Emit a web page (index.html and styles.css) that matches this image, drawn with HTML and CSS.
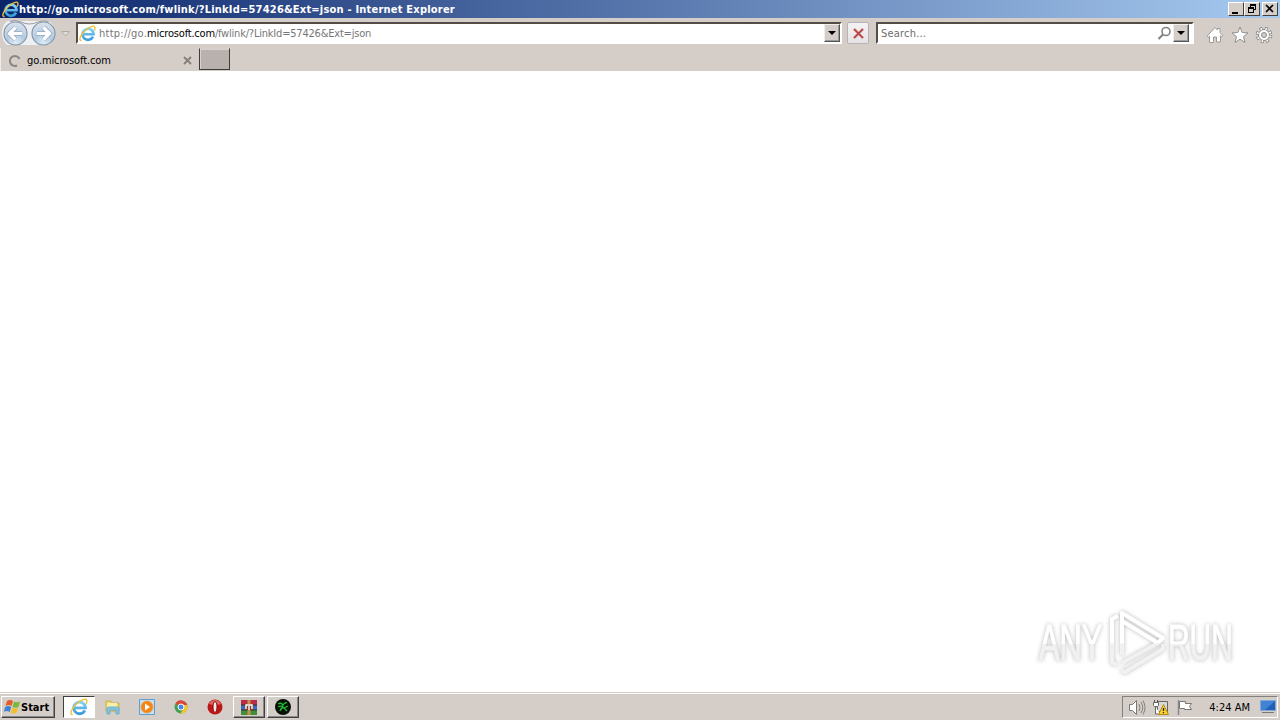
FILE: index.html
```html
<!DOCTYPE html>
<html lang="en">
<head>
  <meta charset="UTF-8" />
  <title>http://go.microsoft.com/fwlink/?LinkId=57426&amp;Ext=json - Internet Explorer</title>
  <link rel="stylesheet" href="styles.css">
</head>
<body>

<!-- shared icons -->
<svg class="defs" width="0" height="0">
  <defs>
    <linearGradient id="blueE" x1="0" y1="0" x2="0" y2="1">
      <stop offset="0" stop-color="#7fd4f8"/>
      <stop offset="1" stop-color="#3a9bdc"/>
    </linearGradient>
    <radialGradient id="orb" cx=".5" cy=".9" r=".9">
      <stop offset="0" stop-color="#dcedf8"/>
      <stop offset=".45" stop-color="#b4cae0"/>
      <stop offset="1" stop-color="#dbe4ee"/>
    </radialGradient>
    <symbol id="ie" viewBox="0 0 16 16">
      <path d="M13.200 11A5.200 5.200 0 1 1 13.700 8.700H4" fill="none" stroke="url(#blueE)" stroke-width="2.500"/>
      <path d="M2.400 14.6C-.8 15 1.2 9.4 5.6 5.4 9.600 1.700 14.400-.3 15 2c.3 1-.2 2.200-.8 3.200" fill="none" stroke="#f0c03a" stroke-width="1.300"/>
    </symbol>
  </defs>
</svg>

<div class="titlebar">
  <svg class="title-icon" width="17" height="17"><use href="#ie"/></svg>
  <span class="title-text">http://go.microsoft.com/fwlink/?LinkId=57426&amp;Ext=json - Internet Explorer</span>
  <div class="window-buttons">
    <button class="win-btn"><svg width="14" height="12"><path d="M3 9h6v2H3z"/></svg></button>
    <button class="win-btn"><svg width="14" height="12"><path d="M5 1h6v6H9V6h1V3H6v1H5zM3 4h6v6H3zM4 6v3h4V6z" fill-rule="evenodd"/></svg></button>
    <button class="win-btn win-close"><svg width="14" height="12"><path d="M3 2l7 7M10 2L3 9" stroke="#000" stroke-width="1.7"/></svg></button>
  </div>
</div>

<div class="toolbar">
  <svg class="nav" width="74" height="30" viewBox="0 0 74 30">
    <path d="M7 3H49Q55 8 55 15T49 27H7Q2 22 2 15T7 3z" fill="#edf0f3"/>
    <path d="M10 3.500Q15 1.500 21 4q8 4 17 0 6-2.500 11 0" fill="none" stroke="#9a9a9c"/>
    <circle cx="15.500" cy="15.500" r="11.500" fill="url(#orb)" stroke="#8796a8" stroke-width="1.200"/>
    <circle cx="43.500" cy="15.500" r="11.500" fill="url(#orb)" stroke="#8796a8" stroke-width="1.200"/>
    <path d="M22 15.500H10M15.500 9.500l-6 6 6 6" fill="none" stroke="#93a9c4" stroke-width="4.600"/>
    <path d="M22 15.500H10M15.500 9.500l-6 6 6 6" fill="none" stroke="#fff" stroke-width="3.200"/>
    <path d="M37 15.500H49M43.500 9.500l6 6-6 6" fill="none" stroke="#93a9c4" stroke-width="4.600"/>
    <path d="M37 15.500H49M43.500 9.500l6 6-6 6" fill="none" stroke="#fff" stroke-width="3.200"/>
    <path d="M61.500 13.500h8l-4 4.500z" fill="#e2deda" stroke="#b0aca8"/>
  </svg>
  <div class="field address">
    <svg width="17" height="17"><use href="#ie"/></svg>
    <span class="url"><span class="scheme">http://go.</span><b>microsoft.com</b>/fwlink/?LinkId=57426&amp;Ext=json</span>
    <button class="drop"></button>
  </div>
  <button class="stop"><svg width="13" height="13"><path d="M2 2l9 9M11 2l-9 9" stroke="#e6b4b4" stroke-width="3"/><path d="M2 2l9 9M11 2l-9 9" stroke="#b23d40" stroke-width="1.700"/></svg></button>
  <div class="field search">
    <span class="hint">Search...</span>
    <svg width="15" height="15" viewBox="0 0 15 15"><circle cx="9" cy="5.500" r="4" fill="none" stroke="#828282" stroke-width="1.600"/><path d="M6 8.500L1.500 13" stroke="#828282" stroke-width="2.200"/></svg>
    <button class="drop"></button>
  </div>
  <div class="tools">
    <svg width="18" height="18" viewBox="0 0 18 18"><path d="M9 1.500l2.500 2.500V2.500h2.500v4l2.800 3-1.300 1-1-.8v6.300h-4V11h-3v5.500h-4v-6.300l-1 .8-1.300-1z" fill="#fff" stroke="#9a9a9a"/></svg>
    <svg width="18" height="18" viewBox="0 0 18 18"><path d="M9 1l2.200 5.500 5.800.4-4.500 3.700 1.500 5.900-5-3.300-5 3.300 1.500-5.900L1 6.900l5.800-.4z" fill="#fff" stroke="#8e8e8e"/></svg>
    <svg width="18" height="18" viewBox="0 0 18 18"><circle cx="9" cy="9" r="6.500" fill="none" stroke="#888" stroke-width="3.600" stroke-dasharray="2.900 2.205"/><circle cx="9" cy="9" r="5.500" fill="#fff" stroke="#888"/><circle cx="9" cy="9" r="6.500" fill="none" stroke="#fff" stroke-width="2" stroke-dasharray="1.500 3.605" stroke-dashoffset="-.7"/><circle cx="9" cy="9" r="2.500" fill="#d6cec8" stroke="#888"/></svg>
  </div>
</div>

<div class="tabs">
  <div class="tab">
    <svg width="14" height="14" viewBox="0 0 14 14"><path d="M9 11.500A5 5 0 1 1 11.500 5" fill="none" stroke="#898582" stroke-width="2"/></svg>
    <span class="tab-title">go.microsoft.com</span>
    <svg class="tab-close" width="9" height="9" viewBox="0 0 9 9"><path d="M1 1l7 7M8 1L1 8" stroke="#827e7a" stroke-width="1.800"/></svg>
  </div>
  <div class="new-tab"></div>
</div>

<div class="page">
  <svg class="watermark" width="210" height="74" viewBox="0 0 210 74">
    <defs>
      <linearGradient id="mark" x1="0" y1="0" x2="0" y2="74" gradientUnits="userSpaceOnUse">
        <stop offset=".5" stop-color="#fff"/>
        <stop offset=".51" stop-color="#f1f1f1"/>
      </linearGradient>
      <linearGradient id="markText" x1="0" y1="-52" x2="0" y2="22" gradientUnits="userSpaceOnUse">
        <stop offset=".5" stop-color="#fff"/>
        <stop offset=".51" stop-color="#f1f1f1"/>
      </linearGradient>
    </defs>
    <text transform="translate(9 54) scale(.67 1.100)">ANY</text>
    <text transform="translate(138 54) scale(.65 1.100)">RUN</text>
    <path class="mark-line" d="M88 10l-6 3v43l5 3M92 49V7l41 25-5 5L92 15M92 57l36-20M91 64l4 2 38-23v-5"/>
  </svg>
</div>

<div class="taskbar">
  <button class="start">
    <svg width="17" height="16" viewBox="0 0 17 16"><path d="M3 2q3-2 6 0L7.500 7q-3-2-6 0z" fill="#e65b29"/><path d="M10 2.500q3 1.500 6 0L14.500 8q-3 1.500-6 0z" fill="#78b83b"/><path d="M1.200 8q3-2 6 0l-1.500 5q-3-2-6 0z" fill="#3d82d3"/><path d="M8.200 8.700q3 1.500 6 0l-1.500 5q-3 1.500-6 0z" fill="#f6bf32"/></svg>
    <span>Start</span>
  </button>
  <div class="tasks">
    <div class="task active"><svg width="18" height="18"><use href="#ie"/></svg></div>
    <div class="task"><svg width="18" height="18" viewBox="0 0 18 18"><path d="M2 3h5l1 2h7v8H2z" fill="#ead777" stroke="#c8ac4d"/><path d="M3 5h10v4H3z" fill="#f9efad"/><path d="M3 16v-5q0-2 2-2h8q2 0 2 2v5h-3v-4H6v4z" fill="#82c5e4" stroke="#60a6ca" stroke-width=".8"/></svg></div>
    <div class="task"><svg width="18" height="18" viewBox="0 0 18 18"><path d="M1.500 1.500h15v15h-15z" fill="#c7e0f2" stroke="#5ba0d4"/><circle cx="9" cy="9" r="6" fill="#f58412" stroke="#e6a14b"/><path d="M7 5.500l5 3.500-5 3.500z" fill="#fff"/></svg></div>
    <div class="task"><svg width="16" height="16" viewBox="0 0 16 16"><circle cx="8" cy="8" r="6.500" fill="#43a251"/><path d="M8 8L2.400 4.700A6.500 6.500 0 0 1 14.300 6H8z" fill="#dc4639"/><path d="M8 8l3 1-3.500 5.500A6.500 6.500 0 0 0 14.300 6H8z" fill="#f6c42c"/><circle cx="8" cy="8" r="3" fill="#4687e8" stroke="#fff"/></svg></div>
    <div class="task"><svg width="18" height="18" viewBox="0 0 18 18"><circle cx="9" cy="9" r="7.500" fill="#bd1717"/><path d="M3 6q2-4 6-4t6 4q-6 2-12 0z" fill="#dc6863"/><ellipse cx="9" cy="9" rx="2" ry="5.500" fill="#f8e9e9" stroke="#8d0d0d"/></svg></div>
    <div class="task raised"><svg width="18" height="17" viewBox="0 0 18 17"><path d="M1 1h16v5H1z" fill="#b92b48"/><path d="M1 6h16v5H1z" fill="#3e69b5"/><path d="M1 11h16v5H1z" fill="#438b3d"/><path d="M1 6h16M1 11h16" stroke="#343434"/><path d="M7.500 1h3v15h-3z" fill="#c49440"/><path d="M5 5h8v6H5z" fill="#893b22"/><path d="M6 10V6h6v4M9 7v4" fill="none" stroke="#fff" stroke-width="1.400"/></svg></div>
    <div class="task raised"><svg width="18" height="18" viewBox="0 0 18 18"><circle cx="9" cy="9" r="8" fill="#071108"/><path d="M4 6q3-2 5 1 2-3 4-2M4 9q4-2 6 1l4-2M6 13q1-4 4-3l3 3M9 7l-2 5" fill="none" stroke="#22ba35" stroke-width="1.300"/></svg></div>
  </div>
  <div class="tray">
    <svg width="18" height="17" viewBox="0 0 18 17"><path d="M1.500 5.500h3l4-4v14l-4-4h-3z" fill="#fff" stroke="#777"/><path d="M11 5q2 3.500 0 7M13 3q3.500 5.500 0 11M15 1.500q4 7 0 14" fill="none" stroke="#85817d"/></svg>
    <svg class="network" width="18" height="17" viewBox="0 0 18 17"><path d="M5.500 2.500h10v10h-10z" fill="#d9d9d9" stroke="#666"/><path d="M2.500 1v3M5.500 1v3" stroke="#555"/><path d="M1.500 3.500h5v3l-1 1h-3l-1-1zM3.500 8v7h5" fill="#fff" stroke="#666"/><path d="M11.500 5.500l5 10h-10z" fill="#ffd02d" stroke="#b48c11"/><path d="M11.500 9v3M11.500 13v1.200" stroke="#222" stroke-width="1.300"/></svg>
    <svg class="flag" width="18" height="17" viewBox="0 0 18 17"><path d="M2.500 1v15" stroke="#888" stroke-width="1.500"/><path d="M3.500 2.500h6v2h6l-2 3 2 3H8.500v-1h-5z" fill="#fff" stroke="#777"/></svg>
    <span class="clock">4:24 AM</span>
    <svg width="16" height="14" viewBox="0 0 16 14"><path d="M.5.500h15v10H.5z" fill="#2360b4" stroke="#82a8d5"/><path d="M1 1h14L5 10H1z" fill="#3f83d4"/><path d="M2 12.500h12" stroke="#777"/></svg>
  </div>
</div>

</body>
</html>
```
FILE: styles.css
```css
* { box-sizing: border-box; }

body {
  margin: 0;
  width: 1280px;
  height: 720px;
  display: flex;
  flex-direction: column;
  overflow: hidden;
  background: #d5cec8;
  font-family: Tahoma, 'DejaVu Sans Condensed', 'DejaVu Sans', sans-serif;
  font-size: 11px;
  color: #000;
}

svg { display: block; flex: none; }
.defs { position: absolute; }

button {
  padding: 0;
  border: 0;
  flex: none;
  font-family: inherit;
  font-size: 11px;
}

span { white-space: nowrap; }

.titlebar {
  height: 18px;
  flex: none;
  display: flex;
  align-items: center;
  padding-left: 2px;
  background: linear-gradient(90deg, #0a246a, #a6caf0);
}

.title-text {
  color: #fff;
  font-weight: bold;
  letter-spacing: 0.21px;
}

.window-buttons {
  margin-left: auto;
  display: flex;
  padding-right: 2px;
}

.win-btn {
  width: 16px;
  height: 14px;
  background: #d5cec8;
  border: 1px solid;
  border-color: #fff #404040 #404040 #fff;
}

.win-close { margin-left: 2px; }

.toolbar {
  height: 30px;
  flex: none;
  display: flex;
  align-items: flex-start;
}

.nav { margin-right: 2px; }

.field {
  height: 22px;
  margin-top: 4px;
  display: flex;
  align-items: center;
  background: #fff;
  border: 2px solid;
  border-color: #554c45 #fff #fff #554c45;
}

.address {
  width: 766px;
  padding-left: 1px;
}

.url {
  flex: 1;
  margin-left: 3px;
  padding-top: 1px;
  color: #777;
  letter-spacing: -0.2px;
}

.scheme { letter-spacing: 0.25px; }

.url b {
  color: #000;
  font-weight: normal;
}

.drop {
  width: 16px;
  height: 18px;
  display: flex;
  align-items: center;
  justify-content: center;
  background: #d5cec8;
  border: 1px solid;
  border-color: #eee #555 #555 #eee;
  box-shadow: inset -1px -1px #999;
}

.drop::before {
  content: "";
  border: 4px solid transparent;
  border-top: 4px solid #000;
  border-bottom: 0;
}

.stop {
  width: 22px;
  height: 22px;
  margin: 4px 7px 0 5px;
  display: flex;
  align-items: center;
  justify-content: center;
  background: linear-gradient(#f5f3f4, #e5e2e5);
  border: 1px solid #b9b3b8;
  border-radius: 2px;
}

.search {
  width: 318px;
  padding: 0 3px;
}

.hint {
  flex: 1;
  padding-top: 1px;
  color: #6d6d6d;
  letter-spacing: 0.2px;
}

.search svg { margin-right: 1px; }

.tools {
  display: flex;
  gap: 7px;
  margin: 8px 0 0 12px;
}

.tools svg + svg + svg { margin-left: -1px; }

.tabs {
  height: 23px;
  flex: none;
  display: flex;
}

.tab {
  width: 199px;
  display: flex;
  align-items: center;
  padding: 2px 7px 0 7px;
  border-left: 1px solid #f0ece8;
}

.tab-title {
  flex: 1;
  margin-left: 5px;
  letter-spacing: -0.12px;
}

.new-tab {
  width: 31px;
  height: 22px;
  background: #b9b1ad;
  border: 1px solid #3f3b39;
  border-top-color: #d5cec8;
  box-shadow: inset 1px 1px #d8d2ce;
}

.page {
  flex: 1;
  display: flex;
  align-items: flex-end;
  justify-content: flex-end;
  padding: 0 40px 12px 0;
  background: #fff;
}

.watermark {
  filter: drop-shadow(0 0 2px rgba(0, 0, 0, 0.28));
}

.watermark text {
  font-family: 'Liberation Sans', Arial, sans-serif;
  font-size: 46px;
  fill: url(#markText);
  stroke: url(#markText);
  stroke-width: 1px;
}

.mark-line {
  fill: none;
  stroke: url(#mark);
  stroke-width: 4px;
  stroke-linejoin: round;
}

.taskbar {
  height: 28px;
  flex: none;
  display: flex;
  align-items: center;
  padding: 1px 2px 0 1px;
  border-top: 1px solid #d5cec8;
  box-shadow: inset 0 1px #fff;
}

.start {
  width: 54px;
  height: 22px;
  display: flex;
  align-items: center;
  padding-left: 2px;
  background: #d5cec8;
  border: 1px solid;
  border-color: #fff #404040 #404040 #fff;
  box-shadow: inset -1px -1px #888;
  font-weight: bold;
}

.tasks {
  display: flex;
  gap: 2px;
  margin-left: 8px;
}

.task {
  width: 32px;
  height: 22px;
  display: flex;
  align-items: center;
  justify-content: center;
}

.active {
  background: #fff;
  border: 1px solid;
  border-color: #404040 #fff #fff #404040;
}

.raised {
  border: 1px solid;
  border-color: #fff #404040 #404040 #fff;
  box-shadow: inset -1px -1px #888;
}

.tray {
  width: 156px;
  height: 22px;
  margin-left: auto;
  display: flex;
  align-items: center;
  padding: 0 1px 0 5px;
  border: 1px solid;
  border-color: #85807a #fff #fff #85807a;
}

.network { margin-left: 6px; }
.flag { margin-left: 6px; }

.clock {
  flex: 1;
  text-align: right;
  margin-right: 10px;
}
```
